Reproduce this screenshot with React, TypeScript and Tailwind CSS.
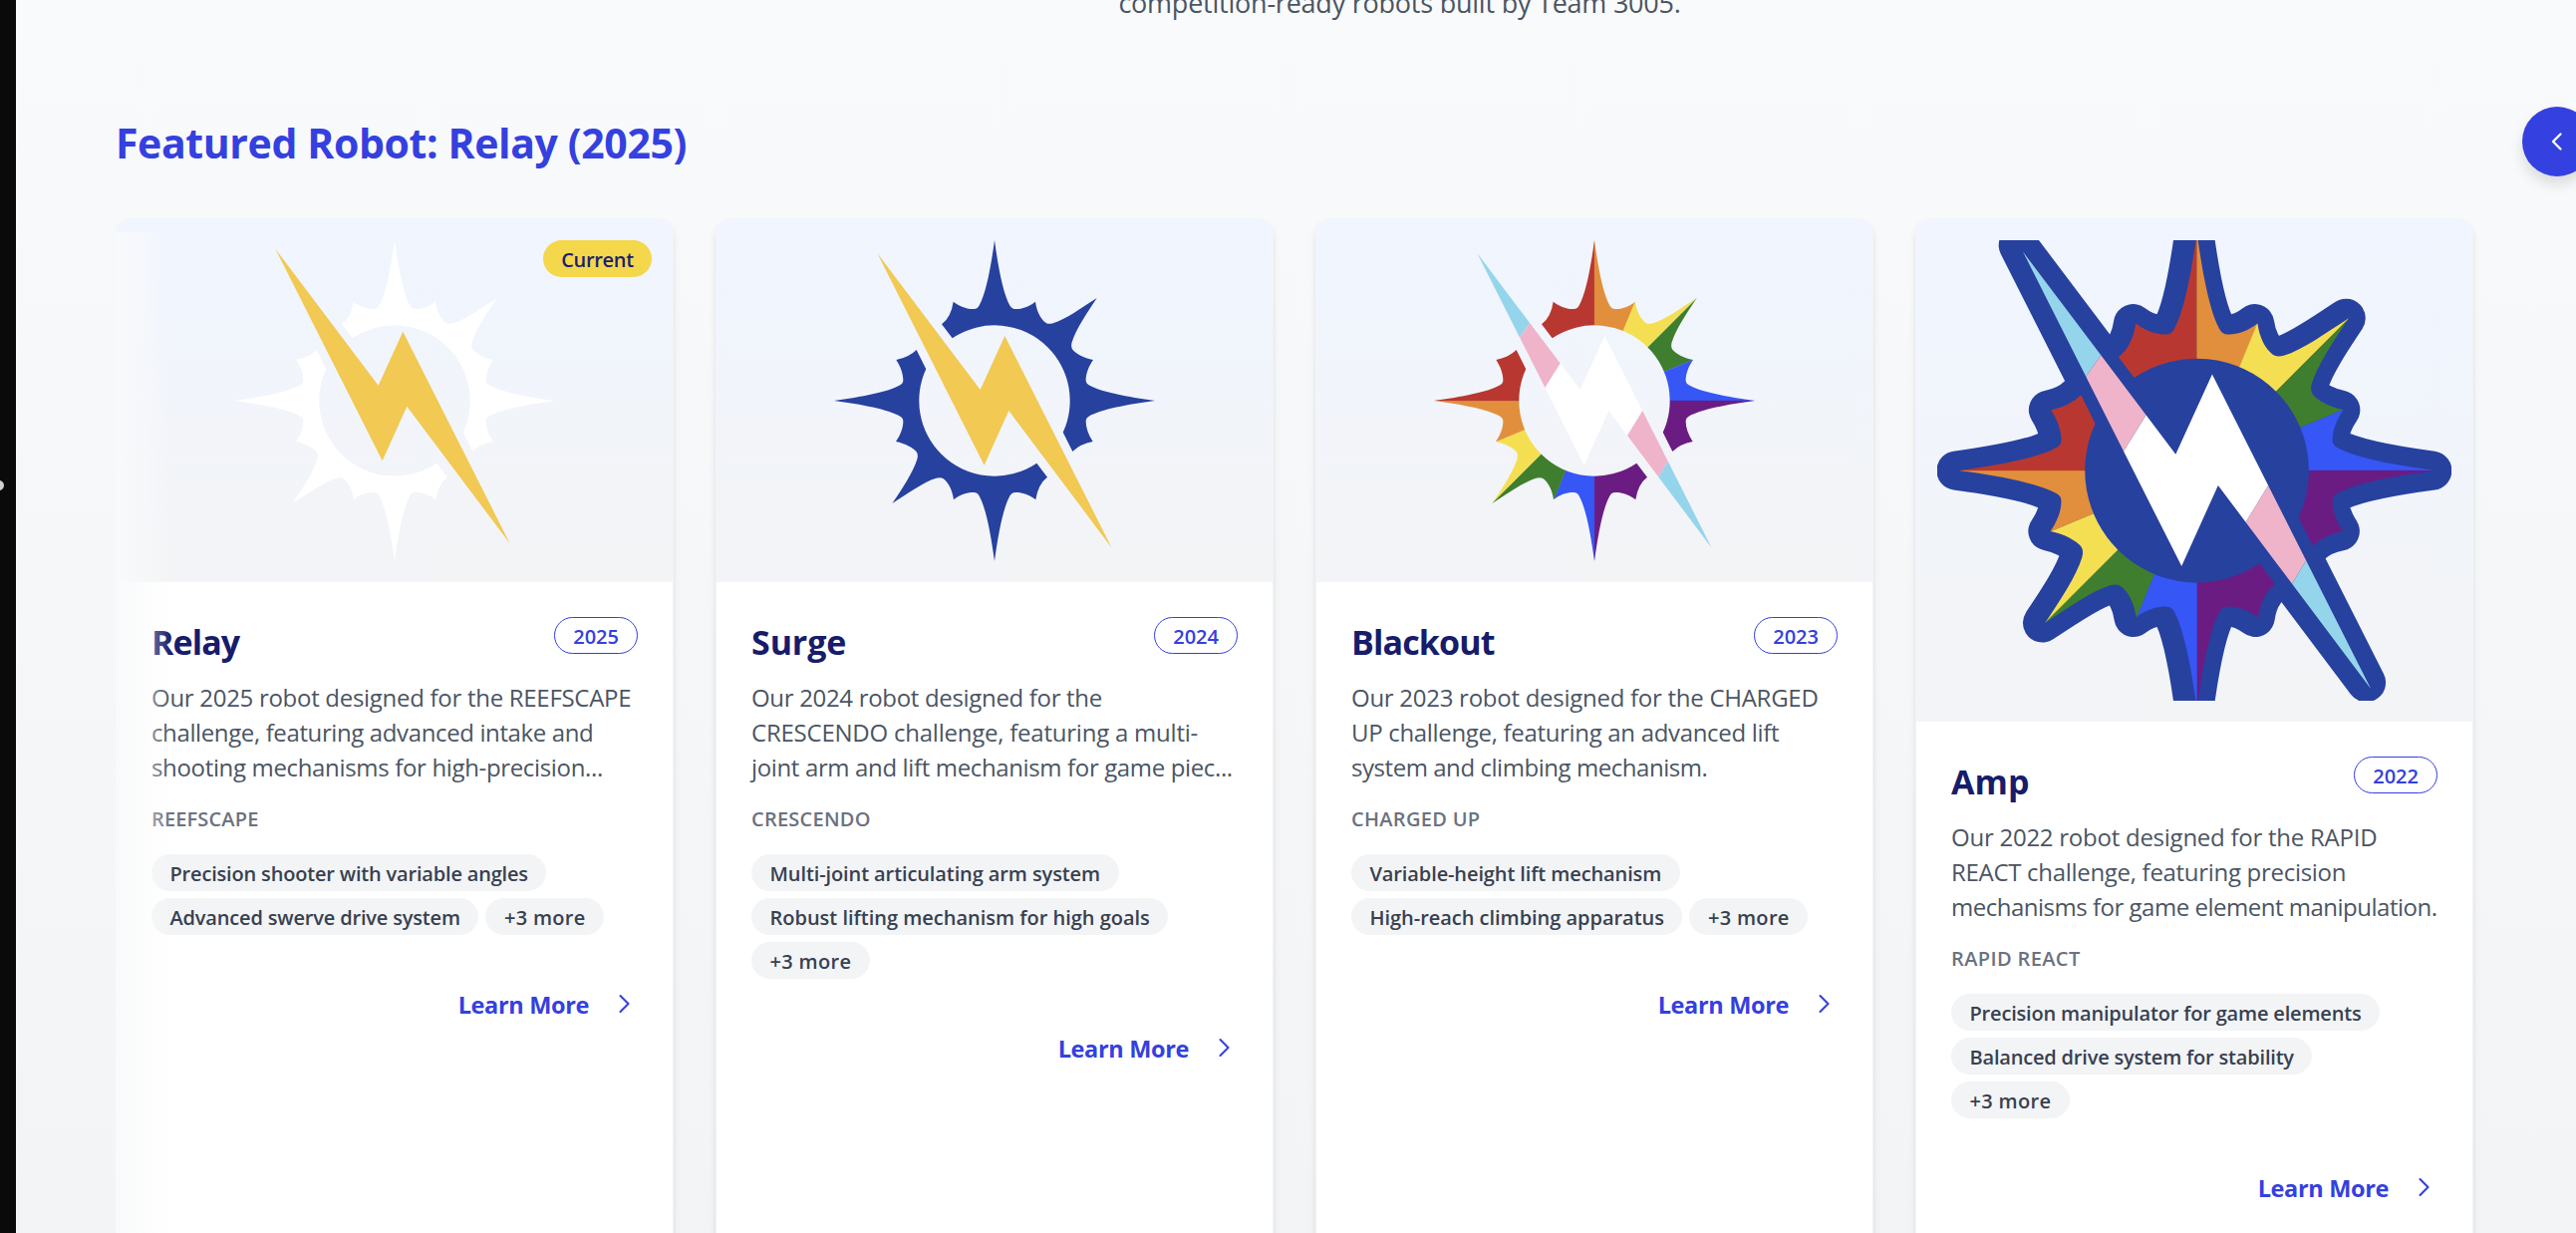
import type { ReactNode } from "react";

const SEGMENT =
  "M473 358.7 L441 317 Q469 296 476 249 C497 265 520 272 538 271 Q548 271 553 262 C574 226 589 145 600 64 C611 145 626 226 647 262 Q652 271 662 271 C680 272 703 265 723 249 C727 278 739 301 754 312 Q762 318 776 314 C815 302 861 268 908 238 C878 283 845 332 833 371 Q829 385 835 393 C845 405 868 418 897 424 C882 446 875 467 875 485 Q875 495 884 500 C920 521 1001 536 1083 547 C1001 558 920 573 884 594 Q875 599 875 609 C875 627 882 648 896 670 Q858 677 835 700 L806.2 642.2 A227 227 0 0 0 760.5 386.5 A227 227 0 0 0 473 358.7 Z";
const BOLT = "M247 103 L557 514 L631 352 L953 990 L643 577 L569 741 Z";
const RAINBOW = ["#b83831", "#e18f3c", "#f4df52", "#3f7e2f", "#3656f6", "#6b1c82"];
const RAINBOW_REVERSED = ["#6b1c82", "#3656f6", "#3f7e2f", "#f4df52", "#e18f3c", "#b83831"];
const WEDGES = [
  "600,547 600,0 100,0 100,547",
  "600,547 600,0 826,0",
  "600,547 825,0 1147,0",
  "600,547 1147,0 1147,320",
  "600,547 1147,320 1147,547",
  "600,547 1147,547 1147,900 600,900",
];

function GearHalf({ colors, clip, flip }: { colors: string[]; clip: string; flip?: boolean }) {
  return (
    <g transform={flip ? "rotate(180 600 547)" : undefined} clipPath={clip}>
      {WEDGES.map((points, i) => (
        <polygon key={points} points={points} fill={colors[i]} stroke={colors[i]} strokeWidth="0.6" />
      ))}
    </g>
  );
}

function PrideMark({ id }: { id: string }) {
  return (
    <>
      <defs>
        <clipPath id={`${id}-gear`}>
          <path d={SEGMENT} />
        </clipPath>
        <clipPath id={`${id}-bolt`}>
          <path d={BOLT} />
        </clipPath>
      </defs>
      <GearHalf colors={RAINBOW} clip={`url(#${id}-gear)`} />
      <GearHalf colors={RAINBOW_REVERSED} clip={`url(#${id}-gear)`} flip />
      <g clipPath={`url(#${id}-bolt)`}>
        <polygon points="541,364 900,300 791,502 653,727 560,780 406,580" fill="#ffffff" />
        <polygon points="150,50 474,215 306,455 150,300" fill="#95d5eb" />
        <polygon points="474,215 541,364 406,580 306,455" fill="#efb4ca" />
        <polygon points="791,502 875,640 740,865 653,727" fill="#efb4ca" />
        <polygon points="875,640 1050,900 1000,1050 740,865" fill="#95d5eb" />
      </g>
    </>
  );
}

function PlainMark({ gear, shift }: { gear: string; shift?: string }) {
  return (
    <svg viewBox="117 64 966 966" className="h-[322px] w-[322px]">
      <path d={SEGMENT} fill={gear} />
      <path d={SEGMENT} fill={gear} transform="rotate(180 600 547)" />
      <path d={BOLT} fill="#f1c953" transform={shift} />
    </svg>
  );
}

function RainbowMark() {
  return (
    <svg viewBox="117 64 966 966" className="h-[322px] w-[322px]">
      <PrideMark id="rainbow" />
    </svg>
  );
}

function OutlinedMark() {
  return (
    <svg viewBox="73.4 80 1042.8 933.7" className="h-[462px] w-[516px]">
      <g fill="#27419f" stroke="#27419f" strokeWidth="79" strokeLinejoin="round" transform="translate(-5.5 0)">
        <path d={SEGMENT} />
        <path d={SEGMENT} transform="rotate(180 600 547)" />
        <path d={BOLT} transform="translate(-4 -13)" />
        <circle cx="600" cy="547" r="220" />
      </g>
      <PrideMark id="outlined" />
    </svg>
  );
}

type Label = { text: string; tracking: string };

function Text({ label }: { label: Label }) {
  return <span className={`whitespace-nowrap ${label.tracking}`}>{label.text}</span>;
}

type Robot = {
  name: Label;
  year: string;
  lines: Label[];
  game: Label;
  chips: Label[];
  art: ReactNode;
  tall?: boolean;
  current?: boolean;
};

const more: Label = { text: "+3 more", tracking: "tracking-[0.32px]" };

const robots: Robot[] = [
  {
    name: { text: "Relay", tracking: "tracking-[-0.9px]" },
    year: "2025",
    lines: [
      { text: "Our 2025 robot designed for the REEFSCAPE", tracking: "tracking-[-0.29px]" },
      { text: "challenge, featuring advanced intake and", tracking: "tracking-[-0.38px]" },
      { text: "shooting mechanisms for high-precision...", tracking: "tracking-[-0.34px]" },
    ],
    game: { text: "REEFSCAPE", tracking: "tracking-[0.15px]" },
    chips: [
      { text: "Precision shooter with variable angles", tracking: "tracking-[-0.18px]" },
      { text: "Advanced swerve drive system", tracking: "tracking-[-0.17px]" },
      more,
    ],
    art: <PlainMark gear="#ffffff" shift="translate(-6 -13)" />,
    current: true,
  },
  {
    name: { text: "Surge", tracking: "tracking-[-0.1px]" },
    year: "2024",
    lines: [
      { text: "Our 2024 robot designed for the", tracking: "tracking-[-0.32px]" },
      { text: "CRESCENDO challenge, featuring a multi-", tracking: "tracking-[-0.23px]" },
      { text: "joint arm and lift mechanism for game piec...", tracking: "tracking-[-0.36px]" },
    ],
    game: { text: "CRESCENDO", tracking: "tracking-[0.24px]" },
    chips: [
      { text: "Multi-joint articulating arm system", tracking: "tracking-[-0.1px]" },
      { text: "Robust lifting mechanism for high goals", tracking: "tracking-[-0.01px]" },
      more,
    ],
    art: <PlainMark gear="#27419f" />,
  },
  {
    name: { text: "Blackout", tracking: "tracking-[-0.85px]" },
    year: "2023",
    lines: [
      { text: "Our 2023 robot designed for the CHARGED", tracking: "tracking-[-0.27px]" },
      { text: "UP challenge, featuring an advanced lift", tracking: "tracking-[-0.32px]" },
      { text: "system and climbing mechanism.", tracking: "tracking-[-0.45px]" },
    ],
    game: { text: "CHARGED UP", tracking: "tracking-[0.3px]" },
    chips: [
      { text: "Variable-height lift mechanism", tracking: "tracking-[-0.11px]" },
      { text: "High-reach climbing apparatus", tracking: "tracking-[-0.03px]" },
      more,
    ],
    art: <RainbowMark />,
  },
  {
    name: { text: "Amp", tracking: "tracking-[0.1px]" },
    year: "2022",
    lines: [
      { text: "Our 2022 robot designed for the RAPID", tracking: "tracking-[-0.25px]" },
      { text: "REACT challenge, featuring precision", tracking: "tracking-[-0.3px]" },
      { text: "mechanisms for game element manipulation.", tracking: "tracking-[-0.49px]" },
    ],
    game: { text: "RAPID REACT", tracking: "tracking-[0.38px]" },
    chips: [
      { text: "Precision manipulator for game elements", tracking: "tracking-[-0.18px]" },
      { text: "Balanced drive system for stability", tracking: "tracking-[-0.19px]" },
      more,
    ],
    art: <OutlinedMark />,
    tall: true,
  },
];

function RobotCard({ robot }: { robot: Robot }) {
  return (
    <article className="relative w-[560px] shrink-0 overflow-hidden rounded-[14px] border border-[#f1f4f9] bg-white shadow-[0_7px_10.5px_-2px_rgba(0,0,0,0.1),0_3.5px_7px_-3.5px_rgba(0,0,0,0.1)]">
      <div
        className={`flex items-center justify-center bg-linear-to-b from-[#f0f5ff] to-[#f3f4f6] ${robot.tall ? "h-[504px]" : "h-[364px]"}`}
      >
        {robot.art}
      </div>
      {robot.current && (
        <span className="absolute right-[21px] top-[21px] flex h-[37px] w-[109px] items-center justify-center rounded-full bg-[#f4d74b] pt-0.5 text-xl font-semibold tracking-[-0.3px] text-[#1a1f71]">
          Current
        </span>
      )}
      <div className="p-[35px]">
        <div className="flex h-[49px] items-start justify-between">
          <h3 className="pt-px text-[34px] font-bold leading-[49px] text-[#171c6b]">
            <Text label={robot.name} />
          </h3>
          <span className="flex h-[37px] items-center rounded-full border border-[#3440df] px-[18px] pt-0.5 text-xl font-semibold text-[#3440df]">
            {robot.year}
          </span>
        </div>
        <p className="mt-[14px] flex flex-col items-start text-2xl/[35px] text-[#4b5563]">
          {robot.lines.map((line) => (
            <Text key={line.text} label={line} />
          ))}
        </p>
        <div className="mt-[21px] text-xl/7 font-semibold text-[#6b7280]">
          <Text label={robot.game} />
        </div>
        <div className="mt-[21px] flex flex-wrap gap-[7px]">
          {robot.chips.map((chip) => (
            <span
              key={chip.text}
              className="flex h-[37px] items-center rounded-full bg-[#f3f4f6] px-[18.5px] pt-0.5 text-xl font-semibold text-[#374151]"
            >
              <Text label={chip} />
            </span>
          ))}
        </div>
        <div className="mt-[53px] flex items-center justify-end text-[23.5px] font-bold leading-[35px] tracking-[-0.35px] text-[#3440df]">
          <span>Learn More</span>
          <svg
            viewBox="0 0 28 28"
            className="mb-px ml-[21px] size-7"
            fill="none"
            stroke="currentColor"
            strokeWidth="2.1"
            strokeLinecap="round"
            strokeLinejoin="round"
          >
            <path d="M10.5 5 L18.5 13 L10.5 21" />
          </svg>
        </div>
      </div>
    </article>
  );
}

export default function App() {
  return (
    <div className="flex h-[1237px] w-full overflow-hidden bg-linear-to-b from-[#f9fafb] to-[#f3f4f6] font-['Open_Sans',sans-serif]">
      <aside className="relative w-4 shrink-0 overflow-hidden bg-[#0a0a0a]">
        <span className="absolute -left-1.5 top-[482px] size-2.5 rounded-full bg-[#d0d0d0]" />
      </aside>
      <main className="relative min-w-0 flex-1 overflow-hidden pl-[100px]">
        <p className="-mt-[17px] h-10 w-[2577px] text-center text-[27px] leading-10 tracking-[-0.23px] text-[#4b5563]">
          competition-ready robots built by Team 3005.
        </p>
        <h2 className="mt-[92px] h-14 text-[41px] font-bold leading-14 tracking-[-0.38px] text-[#3440df]">
          Featured Robot: Relay (2025)
        </h2>
        <section className="relative mt-12 overflow-hidden">
          <div className="flex h-[1100px] gap-[42px]">
            {robots.map((robot) => (
              <RobotCard key={robot.year} robot={robot} />
            ))}
          </div>
          <div className="absolute left-0 top-[14px] h-[1100px] w-14 bg-linear-to-r from-[#f9fafb] to-[#f9fafb]/0" />
        </section>
        <button className="absolute -right-4 top-[107px] flex size-[70px] items-center justify-center rounded-full bg-[#3440df] text-white shadow-[0_8px_14px_rgba(0,0,0,0.12)]">
          <svg
            viewBox="0 0 28 28"
            className="size-7"
            fill="none"
            stroke="currentColor"
            strokeWidth="2.4"
            strokeLinecap="round"
            strokeLinejoin="round"
          >
            <path d="M17.5 6.5 L10 14 L17.5 21.5" />
          </svg>
        </button>
      </main>
    </div>
  );
}
